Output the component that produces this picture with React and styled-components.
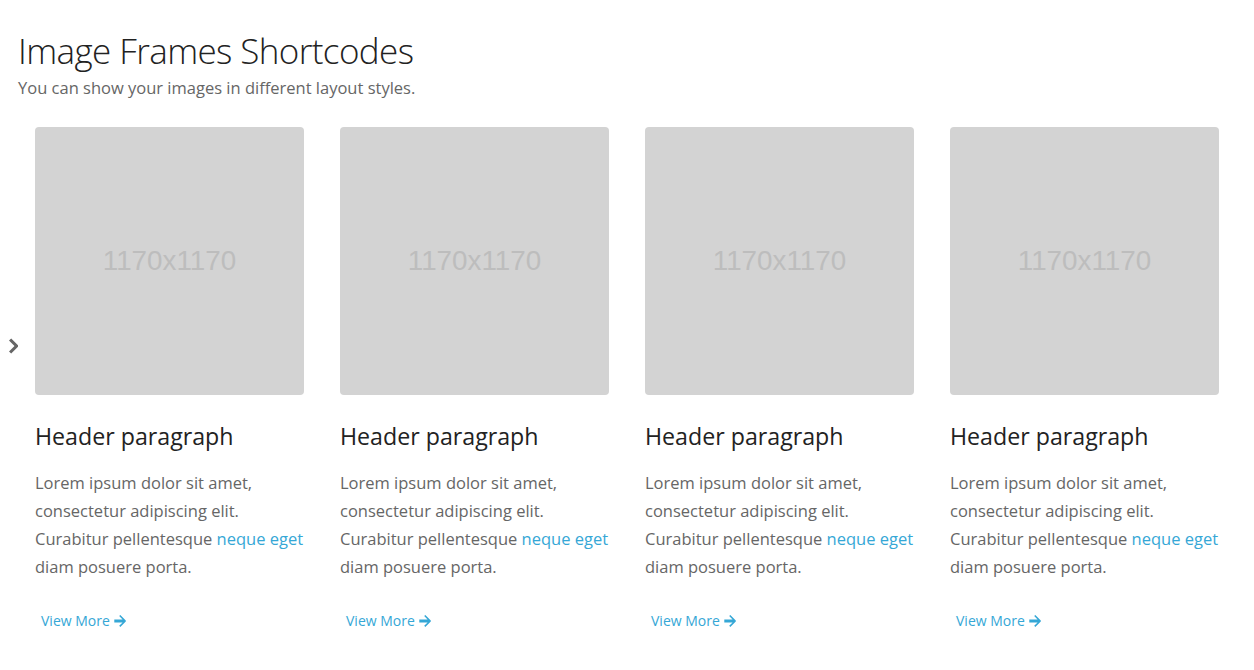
import React from 'react'
import styled, { createGlobalStyle } from 'styled-components'

const GlobalStyle = createGlobalStyle`
  html, body {
    margin: 0;
    padding: 0;
    background: #ffffff;
    font-family: "Open Sans", "Liberation Sans", sans-serif;
  }
`

const Page = styled.div`
  width: 1254px;
  height: 670px;
  overflow: hidden;
  padding: 28px 0 0 18px;
  box-sizing: border-box;
`

const Title = styled.h1`
  margin: 0;
  font-size: 35px;
  font-weight: 300;
  line-height: 46px;
  letter-spacing: -0.6px;
  color: #222222;
`

const Subtitle = styled.p`
  margin: 2px 0 0;
  font-size: 16.5px;
  line-height: 24px;
  color: #666666;
`

const Carousel = styled.div`
  position: relative;
  margin-top: 27px;
  padding-left: 17px;
`

const Chevron = styled.div`
  position: absolute;
  left: -12px;
  top: 210px;
  width: 14px;
  height: 16px;
  color: #666666;
`

const Track = styled.div`
  display: grid;
  grid-template-columns: repeat(4, 269px);
  column-gap: 36px;
`

const Card = styled.div`
  display: flex;
  flex-direction: column;
`

const Placeholder = styled.div`
  width: 269px;
  height: 268px;
  border-radius: 4px;
  background: #d3d3d3;
  display: flex;
  align-items: center;
  justify-content: center;
  font-family: "Liberation Sans", Arial, sans-serif;
  font-size: 27.8px;
  color: #bdbdbd;
`

const Heading = styled.h3`
  margin: 25px 0 0;
  font-size: 23.2px;
  font-weight: 400;
  line-height: 32px;
  color: #222222;
`

const Body = styled.p`
  margin: 17px 0 0;
  font-size: 16.5px;
  line-height: 28px;
  color: #666666;
`

const Link = styled.a`
  color: #35a7d6;
  text-decoration: none;
`

const More = styled.a`
  display: inline-flex;
  align-items: center;
  gap: 4px;
  margin: 30px 0 0 6px;
  font-size: 14px;
  line-height: 20px;
  color: #35a7d6;
  text-decoration: none;
`

const ArrowIcon = () => (
  <svg width="12" height="12" viewBox="0 0 12 12" aria-hidden="true">
    <path
      d="M5.2 1.1 L6.3 0.1 L11.8 5.6 L11.8 6.4 L6.3 11.9 L5.2 10.8 L8.6 7.4 L0.3 7.4 L0.3 4.6 L8.6 4.6 Z"
      fill="currentColor"
    />
  </svg>
)

const ChevronIcon = () => (
  <svg width="14" height="16" viewBox="0 0 14 16" aria-hidden="true">
    <path d="M3 2.5 L5.2 0.5 L12 7.3 L12 8.7 L5.2 15.5 L3 13.5 L8.5 8 Z" fill="currentColor" />
  </svg>
)

const items = [1, 2, 3, 4]

export default function App() {
  return (
    <>
      <GlobalStyle />
      <Page>
        <Title>Image Frames Shortcodes</Title>
        <Subtitle>You can show your images in different layout styles.</Subtitle>
        <Carousel>
          <Chevron>
            <ChevronIcon />
          </Chevron>
          <Track>
            {items.map((i) => (
              <Card key={i}>
                <Placeholder>1170x1170</Placeholder>
                <Heading>Header paragraph</Heading>
                <Body>
                  Lorem ipsum dolor sit amet,
                  <br />
                  consectetur adipiscing elit.
                  <br />
                  Curabitur pellentesque <Link href="#">neque eget</Link>
                  <br />
                  diam posuere porta.
                </Body>
                <div>
                  <More href="#">
                    View More <ArrowIcon />
                  </More>
                </div>
              </Card>
            ))}
          </Track>
        </Carousel>
      </Page>
    </>
  )
}
